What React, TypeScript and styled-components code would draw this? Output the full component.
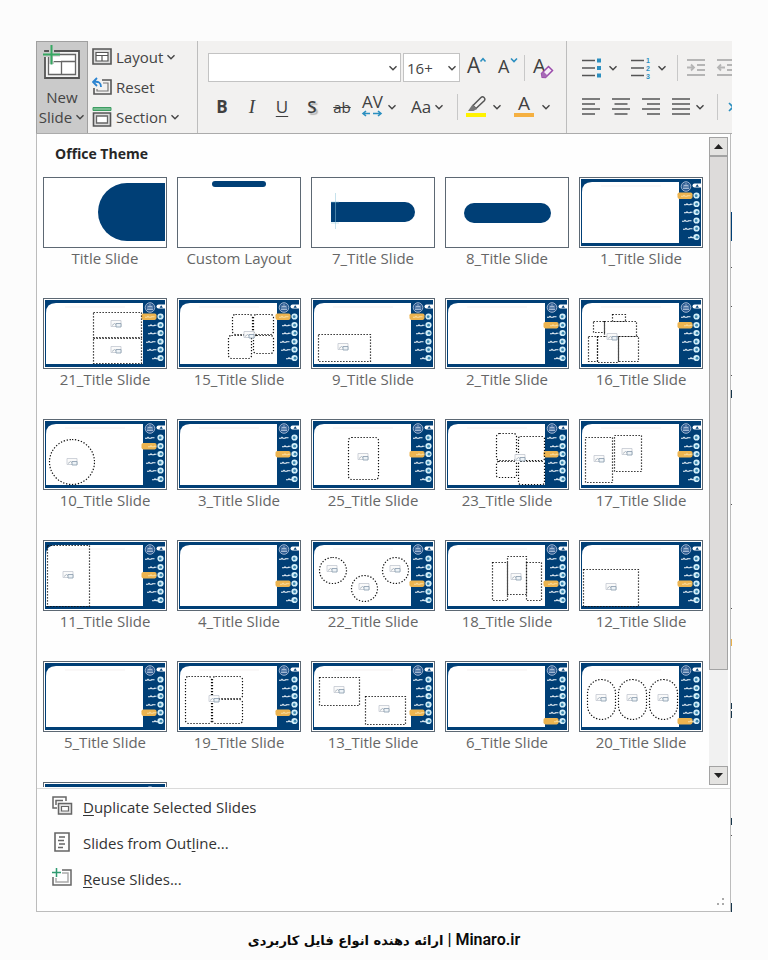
import React from 'react';
import styled, { createGlobalStyle, css } from 'styled-components';

const navy = '#003f76';
const ink = '#444444';
const accent = '#2b8fc0';

const GlobalStyle = createGlobalStyle`
  * { box-sizing: border-box; }
  body { margin: 0; background: #fcfcfc; font-family: 'Open Sans', 'Noto Sans', sans-serif; color: ${ink}; }
  button, input, select { font: inherit; color: inherit; }
`;

const Page = styled.main`
  padding: 41px 36px 0;
  min-height: 100vh;
`;

const Window = styled.div`
  position: relative;
`;

const Ribbon = styled.header`
  display: flex;
  height: 93px;
  background: #f2f1f0;
  border-bottom: 1px solid #ababab;
  overflow: hidden;
`;

const plainButton = css`
  border: 0;
  padding: 0;
  background: none;
  display: flex;
  align-items: center;
  flex: none;
`;

const NewSlideButton = styled.button`
  ${plainButton}
  flex-direction: column;
  width: 52px;
  height: 93px;
  padding-top: 4px;
  background: #cacaca;
  border: 1px solid #a0a0a0;
  font-size: 15px;
  line-height: 20px;
  gap: 5px;
  svg { flex: none; overflow: visible; }
`;

const WithChevron = styled.span`
  display: flex;
  align-items: center;
  gap: 3px;
`;

const SlideTools = styled.div`
  display: flex;
  flex-direction: column;
  width: 110px;
  flex: none;
  padding: 1px 0 0 4px;
  border-right: 1px solid #bdbdbd;
`;

const SlideTool = styled.button`
  ${plainButton}
  height: 30px;
  gap: 4px;
  font-size: 15px;
`;

const ToolGroup = styled.div<{ $width?: number }>`
  display: flex;
  flex-direction: column;
  flex: none;
  gap: 4px;
  width: ${p => (p.$width ? `${p.$width}px` : 'auto')};
  padding: 9px 0 0 9px;
  border-right: ${p => (p.$width ? '1px solid #bdbdbd' : '0')};
`;

const ToolRow = styled.div`
  display: flex;
  align-items: center;
  height: 35px;
`;

const Tool = styled.button<{ $w?: number; $ml?: number }>`
  ${plainButton}
  justify-content: center;
  width: ${p => p.$w ?? 30}px;
  height: 28px;
  margin-left: ${p => p.$ml ?? 0}px;
  font-size: 17px;
  color: #404040;
  svg { flex: none; overflow: visible; }
`;

const Bold = styled.b`font-size: 17px;`;
const Italic = styled.i`font-family: 'Liberation Serif', serif; font-size: 19px;`;
const Underlined = styled.span`text-decoration: underline; text-underline-offset: 3px;`;
const Shadowed = styled.span`font-weight: 600; text-shadow: 2px 2px 1px #b5b5b5;`;
const Struck = styled.s`font-size: 15px; padding: 0 2px;`;
const CaseLabel = styled.span`font-size: 17px;`;

const Separator = styled.span<{ $ml: number }>`
  width: 1px;
  height: 26px;
  flex: none;
  margin-left: ${p => p.$ml}px;
  background: #c8c8c8;
`;

const Combo = styled.label<{ $w: number }>`
  display: flex;
  align-items: center;
  width: ${p => p.$w}px;
  height: 29px;
  margin: 0 2px 0 1px;
  padding-right: 2px;
  background: #fff;
  border: 1px solid #c3c3c3;
  & + & { margin: 0; }
`;

const ComboInput = styled.input`
  flex: 1;
  min-width: 0;
  border: 0;
  padding: 0 0 0 3px;
  background: none;
  outline: 0;
  font-size: 15px;
`;

const Panel = styled.section`
  background: #fefefe;
  border: 1px solid #bcbcbc;
  border-top: 0;
  margin-right: 1px;
`;

const GalleryArea = styled.div`
  display: flex;
  height: 655px;
  border-bottom: 1px solid #dadada;
`;

const Gallery = styled.div`
  flex: 1;
  overflow: hidden;
  padding: 0 0 0 6px;
  margin-bottom: 1px;
`;

const Heading = styled.h2`
  margin: 0;
  padding: 9px 0 0 12px;
  height: 43px;
  font-size: 14px;
  line-height: 22px;
  font-weight: 700;
  color: #262626;
`;

const Grid = styled.div`
  display: grid;
  grid-template-columns: repeat(auto-fill, 124px);
  grid-auto-rows: 121px;
  column-gap: 10px;
`;

const LayoutTile = styled.button`
  ${plainButton}
  flex-direction: column;
  justify-content: flex-start;
  font-size: 15px;
  line-height: 20px;
  color: #666;
  svg { display: block; }
`;

const Scrollbar = styled.div`
  display: flex;
  flex-direction: column;
  width: 19px;
  flex: none;
  margin: 3px 2px 3px 0;
  background: #f1f1f1;
`;

const ScrollArrow = styled.button`
  ${plainButton}
  justify-content: center;
  height: 19px;
  background: #e4e3e1;
  border: 1px solid #a3a3a3;
`;

const ScrollThumb = styled.div`
  height: 514px;
  background: #dddbda;
  border: 1px solid #a3a3a3;
`;

const ScrollTrack = styled.div`
  flex: 1;
`;

const Menu = styled.div`
  display: flex;
  flex-direction: column;
`;

const MenuItem = styled.button`
  ${plainButton}
  height: 36px;
  padding-left: 14px;
  gap: 10px;
  font-size: 15px;
  color: #333;
  u { text-underline-offset: 2px; }
`;

const GripRow = styled.div`
  display: flex;
  justify-content: flex-end;
  height: 14px;
  padding-right: 4px;
`;

const EdgeMarks = styled.svg`
  position: absolute;
  right: 0;
  top: 93px;
`;

const Caption = styled.footer`
  padding-top: 16px;
  text-align: center;
  font-family: Roboto, 'DejaVu Sans', sans-serif;
  font-weight: 600;
  font-size: 16px;
  line-height: 24px;
  color: #0a0a0a;
`;

const Tagline = styled.span`
  font-family: 'DejaVu Sans', sans-serif;
  font-weight: 700;
  font-size: 13px;
`;

const Chevron = () => (
  <svg width="10" height="10" viewBox="0 0 10 10" fill="none" stroke="#444" strokeWidth="1.4">
    <path d="M1.5 3.2 5 6.7 8.5 3.2" />
  </svg>
);

const NewSlideIcon = () => (
  <svg width="38" height="36" viewBox="0 0 38 36" fill="none">
    <path d="M2 5h34v27H2z" fill="#f4f4f4" stroke="#555" strokeWidth="1.800" />
    <path d="M5.500 8.500h27v20h-27z" fill="#fff" />
    <path d="M5.500 8.500h27v20h-27zM5.500 15.500h27M18.500 15.500v13" stroke="#666" strokeWidth="1.300" />
    <path d="M0 8.500h17M8.500 0v18" stroke="#cacaca" strokeWidth="5" />
    <path d="M10 10.500h8v4.500h-8z" fill="#fff" />
    <path d="M0 8.500h17M8.500-1v19.500" stroke="#36a862" strokeWidth="2" />
  </svg>
);

const LayoutIcon = () => (
  <svg width="20" height="18" viewBox="0 0 20 18" fill="none" stroke="#555">
    <path d="M1 1h18v15H1z" fill="#ddd" strokeWidth="1.600" />
    <path d="M4 4.500h12v8.500H4z" fill="#fff" strokeWidth="1.200" />
    <path d="M4 7.500h12M10 7.500V13" strokeWidth="1.200" />
  </svg>
);

const ResetIcon = () => (
  <svg width="20" height="20" viewBox="0 0 20 20" fill="none">
    <path d="M10 3h9v14H2v-6" stroke="#555" strokeWidth="1.600" />
    <path d="M11 6h5v8H5v-2" stroke="#777" strokeWidth="1.200" />
    <path d="M5 1 1 5l4 4M1.500 5C7 4 9 6 9 10" stroke="#2b83d0" strokeWidth="1.800" />
  </svg>
);

const SectionIcon = () => (
  <svg width="20" height="20" viewBox="0 0 20 20" fill="none">
    <path d="M1 .5h18v3H1z" fill="#78bd91" stroke="#3d9d62" />
    <path d="M1.500 6h17v13h-17z" fill="#ddd" stroke="#555" strokeWidth="1.600" />
    <path d="M4.500 9h11v7h-11z" fill="#fff" stroke="#666" strokeWidth="1.300" />
  </svg>
);

const GrowIcon = ({ size, down }: { size: number; down?: boolean }) => (
  <svg width="22" height="24" viewBox="0 0 22 24">
    <text x="1" y="17" fontSize={size} fontFamily="Open Sans" fill="#404040">A</text>
    <path d={down ? 'M14 2.500 17 5.500 20 2.500' : 'M14.500 5.500 17 2.800 19.500 5.500'} fill="none" stroke={accent} strokeWidth="1.600" />
  </svg>
);

const EraserIcon = () => (
  <svg width="24" height="24" viewBox="0 0 24 24">
    <text x="2" y="17" fontSize="20" fontFamily="Open Sans" fill="#404040">A</text>
    <path d="m10.500 17.500 7-7 4 4-7 7-3.300-.3z" fill="#f7eef9" stroke="#9a4bab" strokeWidth="1.500" />
    <path d="m10.500 17.500 2-2 4 4-2 2-3.300-.3z" fill="#a868b7" />
  </svg>
);

const SpacingIcon = () => (
  <svg width="24" height="24" viewBox="0 0 24 24" fill="none">
    <text x="2" y="13" fontSize="17" fontFamily="Open Sans" fill="#404040">AV</text>
    <path d="M3 18.500h7M6 16 3 18.500 6 21M13 18.500h8M18 16l3 2.500-3 2.500" stroke={accent} strokeWidth="1.600" />
  </svg>
);

const HighlightIcon = () => (
  <svg width="22" height="24" viewBox="0 0 22 24" fill="none">
    <path d="M1 18h20v4H1z" fill="#fff200" />
    <path d="m8 10.500 8-8c2-2 5 1 3.500 3L11 13.500z" stroke="#555" strokeWidth="1.500" />
    <path d="m7.500 9.500 4.500 4.500L8.500 16H3z" fill="#777" />
  </svg>
);

const FontColorIcon = () => (
  <svg width="22" height="24" viewBox="0 0 22 24">
    <path d="M1 18h20v4H1z" fill="#f5b041" />
    <text x="5" y="15" fontSize="19" fontFamily="Open Sans" fill="#404040">A</text>
  </svg>
);

const ListIcon = ({ numbered }: { numbered?: boolean }) => (
  <svg width="20" height="22" viewBox="0 0 20 22">
    <path d="M0 3.500h13M0 11h13M0 18.500h13" stroke="#555" strokeWidth="1.600" />
    {numbered ? (
      <g fill={accent} fontSize="7" fontWeight="700" fontFamily="Liberation Sans">
        <text x="15" y="6">1</text><text x="15" y="14">2</text><text x="15" y="22">3</text>
      </g>
    ) : (
      <path d="M15 1.500h4v4h-4zM15 9h4v4h-4zM15 16.500h4v4h-4z" fill={accent} />
    )}
  </svg>
);

const IndentIcon = ({ out }: { out?: boolean }) => (
  <svg width="20" height="20" viewBox="0 0 20 20" fill="none" stroke="#b5b5b5" strokeWidth="1.800">
    <path d="M1 2h18M11 7h8M11 12h8M1 17h18" />
    <path d={out ? 'M9 9.500H2M5 6.500l-3 3 3 3' : 'M1 9.500h7M5 6.500l3 3-3 3'} />
  </svg>
);

const alignments: Record<string, string> = {
  left: 'M0 2h18M0 7h13M0 12h18M0 17h13',
  center: 'M0 2h18M2.500 7h13M0 12h18M2.500 17h13',
  right: 'M0 2h18M5 7h13M0 12h18M5 17h13',
  justify: 'M0 2h18M0 7h18M0 12h18M0 17h18',
};

const AlignIcon = ({ kind }: { kind: string }) => (
  <svg width="18" height="20" viewBox="0 0 18 20">
    <path d={alignments[kind]} stroke="#555" strokeWidth="1.700" />
  </svg>
);

const DuplicateIcon = () => (
  <svg width="22" height="22" viewBox="0 0 22 22" fill="none" stroke="#666" strokeWidth="1.500">
    <path d="M6 12H2V1h13v4M5 9V4.500h7" />
    <path d="M7.500 7.500h13V18h-13z" fill="#e4e4e4" />
    <path d="M10.500 10.500h7v4.500h-7z" fill="#fff" strokeWidth="1.200" />
  </svg>
);

const OutlineIcon = () => (
  <svg width="22" height="22" viewBox="0 0 22 22" fill="none" stroke="#666">
    <path d="M4 1h14v18H4z" strokeWidth="1.600" />
    <path d="M8 5h6M7 8.500h6M8 12h6M7 15.500h5" strokeWidth="1.300" />
  </svg>
);

const ReuseIcon = () => (
  <svg width="22" height="22" viewBox="0 0 22 22" fill="none" strokeWidth="1.500">
    <path d="M11 2h9v15H2V9" stroke="#666" />
    <path d="M11 5h6v9H5v-4" stroke="#aaa" />
    <path d="M1 4.500h9M5.500 0v9" stroke="#2f9a70" />
  </svg>
);

type Shape = [x: number, y: number, w: number, h: number, r?: number];
type SlideLayout = { name?: string; active?: number; shapes?: Shape[]; pics?: [number, number][]; art?: React.ReactNode };

const layouts: SlideLayout[] = [
  { name: 'Title Slide', art: <path d="M122 6v58H84a29 29 0 0 1 0-58z" fill={navy} /> },
  { name: 'Custom Layout', art: <rect x="35" y="4" width="54" height="6" rx="3" fill={navy} /> },
  {
    name: '7_Title Slide',
    art: (
      <>
        <path d="M20 25h74a10 10 0 0 1 0 20H20z" fill={navy} />
        <path d="M24.500 16v36M20 25h8M20 46h8" stroke="#8cc4d8" strokeWidth=".5" />
      </>
    ),
  },
  { name: '8_Title Slide', art: <rect x="19" y="26" width="87" height="20" rx="10" fill={navy} /> },
  { name: '1_Title Slide', active: 0 },
  { name: '21_Title Slide', active: 0, shapes: [[50, 14, 48, 25], [50, 40, 48, 25]], pics: [[73, 26], [73, 52]] },
  { name: '15_Title Slide', active: 0, shapes: [[55, 16, 20, 20, 3], [76, 16, 20, 20, 3], [51, 37, 23, 23, 3], [76, 37, 20, 18, 3]], pics: [[72, 37]] },
  { name: '9_Title Slide', active: 0, shapes: [[7, 36, 52, 27]], pics: [[32, 49]] },
  { name: '2_Title Slide', active: 1 },
  { name: '16_Title Slide', active: 1, shapes: [[33, 16, 13, 7], [14, 23, 11, 11], [25, 23, 32, 15], [9, 38, 9, 25], [18, 38, 21, 26], [39, 38, 20, 25]], pics: [[33, 39]] },
  { name: '10_Title Slide', active: 1, shapes: [[6, 20, 45, 45, 23]], pics: [[29, 43]] },
  { name: '3_Title Slide', active: 2 },
  { name: '25_Title Slide', active: 2, shapes: [[37, 18, 30, 42, 3]], pics: [[52, 38]] },
  { name: '23_Title Slide', active: 2, shapes: [[51, 14, 20, 27, 3], [73, 17, 26, 24, 2], [51, 42, 20, 16, 2], [73, 42, 26, 23, 2]], pics: [[75, 39]] },
  { name: '17_Title Slide', active: 2, shapes: [[6, 18, 27, 45], [35, 16, 27, 36]], pics: [[20, 40], [48, 33]] },
  { name: '11_Title Slide', active: 2, shapes: [[4, 5, 42, 61]], pics: [[25, 35]] },
  { name: '4_Title Slide', active: 3 },
  { name: '22_Title Slide', active: 3, shapes: [[8, 17, 27, 26, 13], [40, 35, 26, 26, 13], [71, 17, 26, 26, 13]], pics: [[21, 29], [53, 47], [84, 29]] },
  { name: '18_Title Slide', active: 3, shapes: [[47, 22, 15, 38], [62, 16, 19, 38], [81, 22, 15, 38]], pics: [[71, 37]] },
  { name: '12_Title Slide', active: 3, shapes: [[4, 29, 55, 37]], pics: [[32, 47]] },
  { name: '5_Title Slide', active: 4 },
  { name: '19_Title Slide', active: 4, shapes: [[8, 15, 26, 47, 3], [35, 15, 30, 22, 3], [35, 38, 30, 24, 3]], pics: [[37, 38]] },
  { name: '13_Title Slide', active: 4, shapes: [[8, 16, 40, 28], [54, 35, 40, 28]], pics: [[28, 29], [73, 48]] },
  { name: '6_Title Slide', active: 5 },
  { name: '20_Title Slide', active: 5, shapes: [[8, 18, 28, 40, 14], [39, 18, 28, 40, 14], [70, 18, 28, 40, 14]], pics: [[22, 37], [53, 37], [84, 37]] },
  { active: 5 },
];

const navRows = [18.5, 27, 35, 43.5, 51.5, 60];
const navWords = [102, 105, 105, 103, 104, 109];

const SlideFrame = ({ active }: { active: number }) => (
  <>
    <path d="M2 2h120v67H2z" fill={navy} />
    <path d="M3 66V15q0-10 10-10h87v61z" fill="#fff" />
    <path d="M22 9h60" stroke="#f8f6f6" strokeWidth="1.500" />
    <circle cx="107" cy="9.500" r="4.800" fill="#2b5a90" stroke="#a9bcd6" strokeWidth=".9" />
    <path d="M104 11.500h6M105 8.500h4M107 6v6M105 7.500v4M109 7.500v4" stroke="#b5c7dd" strokeWidth=".8" />
    <path d="M122 6.500h-6.500a2 2 0 0 0 0 4H122z" fill="#fff" />
    <path d="m116.500 9.800 1.700-2.600 1.700 2.600z" fill={navy} />
    {navRows.map((y, i) => (
      <g key={y}>
        {i === active && <rect x="98.500" y={y - 3} width="15" height="6.400" rx="1.800" fill="#ecb450" />}
        <path
          d={`M${navWords[i]} ${y + 0.8}h2l1-1 1 1h2l1-.8M${Math.min(navWords[i] + 7, 111)} ${y + 0.3}h2.500`}
          stroke={i === active ? '#f8dc9f' : '#eef5fa'}
          strokeWidth="1.100"
          fill="none"
        />
        <circle cx="117.500" cy={y} r="3.100" fill="#d3effa" />
        <circle cx={117.2 + (i % 3) * 0.4} cy={y + 0.2} r="1.400" fill="#3b86ae" />
      </g>
    ))}
  </>
);

const Thumbnail = ({ layout }: { layout: SlideLayout }) => (
  <svg width="124" height="71" viewBox="0 0 124 71" fill="none">
    <rect x=".5" y=".5" width="123" height="70" fill="#fff" stroke="#5d6873" />
    {layout.active !== undefined && <SlideFrame active={layout.active} />}
    {layout.art}
    {layout.shapes?.map(([x, y, w, h, r = 0], i) => (
      <rect key={i} x={x + 0.5} y={y + 0.5} width={w} height={h} rx={r} stroke="#111" strokeWidth="1.200" strokeDasharray="1.300 1.700" />
    ))}
    {layout.pics?.map(([x, y], i) => (
      <g key={i} strokeWidth=".8">
        <path d={`M${x - 5} ${y - 3.5}h10v6h-10z`} fill="#fafafa" stroke="#c3c8d0" />
        <path d={`m${x - 4} ${y + 1.5} 2.500-2 2 1.500`} stroke="#9daab5" />
        <path d={`M${x} ${y - 0.5}h5v3.500h-5z`} fill="#eef3f7" stroke="#8799ab" />
      </g>
    ))}
  </svg>
);

export default function App() {
  return (
    <Page>
      <GlobalStyle />
      <Window>
        <Ribbon>
          <NewSlideButton>
            <NewSlideIcon />
            <span>New<WithChevron>Slide <Chevron /></WithChevron></span>
          </NewSlideButton>
          <SlideTools>
            <SlideTool><LayoutIcon /><WithChevron>Layout <Chevron /></WithChevron></SlideTool>
            <SlideTool><ResetIcon />Reset</SlideTool>
            <SlideTool><SectionIcon /><WithChevron>Section <Chevron /></WithChevron></SlideTool>
          </SlideTools>
          <ToolGroup $width={369}>
            <ToolRow>
              <Combo $w={193}><ComboInput aria-label="Font" defaultValue="" /><Chevron /></Combo>
              <Combo $w={57}><ComboInput aria-label="Font size" defaultValue="16+" /><Chevron /></Combo>
              <Tool $w={24} $ml={5} aria-label="Increase font size"><GrowIcon size={21} /></Tool>
              <Tool $w={24} $ml={7} aria-label="Decrease font size"><GrowIcon size={18} down /></Tool>
              <Separator $ml={4} />
              <Tool $w={24} $ml={6} aria-label="Clear formatting"><EraserIcon /></Tool>
            </ToolRow>
            <ToolRow>
              <Tool aria-label="Bold"><Bold>B</Bold></Tool>
              <Tool aria-label="Italic"><Italic>I</Italic></Tool>
              <Tool aria-label="Underline"><Underlined>U</Underlined></Tool>
              <Tool aria-label="Shadow"><Shadowed>S</Shadowed></Tool>
              <Tool aria-label="Strikethrough"><Struck>ab</Struck></Tool>
              <Tool aria-label="Character spacing"><SpacingIcon /></Tool>
              <Tool $w={10} aria-label="Spacing options"><Chevron /></Tool>
              <Tool $w={26} $ml={11} aria-label="Change case"><CaseLabel>Aa</CaseLabel></Tool>
              <Tool $w={10} aria-label="Case options"><Chevron /></Tool>
              <Separator $ml={13} />
              <Tool $w={24} $ml={6} aria-label="Highlight"><HighlightIcon /></Tool>
              <Tool $w={10} $ml={4} aria-label="Highlight colors"><Chevron /></Tool>
              <Tool $w={24} $ml={10} aria-label="Font color"><FontColorIcon /></Tool>
              <Tool $w={10} $ml={5} aria-label="Font colors"><Chevron /></Tool>
            </ToolRow>
          </ToolGroup>
          <ToolGroup>
            <ToolRow>
              <Tool $w={20} $ml={6} aria-label="Bullets"><ListIcon /></Tool>
              <Tool $w={10} $ml={6} aria-label="Bullet styles"><Chevron /></Tool>
              <Tool $w={20} $ml={13} aria-label="Numbering"><ListIcon numbered /></Tool>
              <Tool $w={10} $ml={6} aria-label="Number styles"><Chevron /></Tool>
              <Separator $ml={10} />
              <Tool $w={20} $ml={8} aria-label="Increase indent"><IndentIcon /></Tool>
              <Tool $w={20} $ml={10} aria-label="Decrease indent"><IndentIcon out /></Tool>
            </ToolRow>
            <ToolRow>
              <Tool $w={18} $ml={6} aria-label="Align left"><AlignIcon kind="left" /></Tool>
              <Tool $w={18} $ml={12} aria-label="Center"><AlignIcon kind="center" /></Tool>
              <Tool $w={18} $ml={12} aria-label="Align right"><AlignIcon kind="right" /></Tool>
              <Tool $w={18} $ml={12} aria-label="Justify"><AlignIcon kind="justify" /></Tool>
              <Tool $w={10} $ml={5} aria-label="Justify options"><Chevron /></Tool>
              <Separator $ml={12} />
              <Tool $w={10} $ml={10} aria-label="Text direction">
                <svg width="10" height="10" viewBox="0 0 10 10"><path d="m1 1 4 4-4 4M9 1 5 5l4 4" fill="none" stroke={accent} strokeWidth="1.600" /></svg>
              </Tool>
            </ToolRow>
          </ToolGroup>
        </Ribbon>
        <Panel>
          <GalleryArea>
            <Gallery>
              <Heading>Office Theme</Heading>
              <Grid>
                {layouts.map((layout, i) => (
                  <LayoutTile key={i} aria-label={layout.name ?? 'More layouts'}>
                    <Thumbnail layout={layout} />
                    {layout.name}
                  </LayoutTile>
                ))}
              </Grid>
            </Gallery>
            <Scrollbar>
              <ScrollArrow aria-label="Scroll up">
                <svg width="9" height="5" viewBox="0 0 9 5"><path d="M0 5 4.500 0 9 5z" fill="#222" /></svg>
              </ScrollArrow>
              <ScrollThumb />
              <ScrollTrack />
              <ScrollArrow aria-label="Scroll down">
                <svg width="9" height="5" viewBox="0 0 9 5"><path d="M0 0h9L4.500 5z" fill="#222" /></svg>
              </ScrollArrow>
            </Scrollbar>
          </GalleryArea>
          <Menu>
            <MenuItem><DuplicateIcon /><span><u>D</u>uplicate Selected Slides</span></MenuItem>
            <MenuItem><OutlineIcon /><span>Slides from Out<u>l</u>ine...</span></MenuItem>
            <MenuItem><ReuseIcon /><span><u>R</u>euse Slides...</span></MenuItem>
          </Menu>
          <GripRow>
            <svg width="10" height="10" viewBox="0 0 10 10"><path d="M6 1h2v2H6zM1 6h2v2H1zM6 6h2v2H6z" fill="#aaa" /></svg>
          </GripRow>
        </Panel>
        <EdgeMarks width="1" height="778" viewBox="0 0 1 778">
          <path d="M0 78h1v29H0z" fill={navy} />
          <path d="M0 256h1v8H0zM0 569h1v6H0zM0 577h1v7H0zM0 684h1v7H0zM0 769h1v9H0z" fill="#16364c" />
          <path d="M0 133h1v1H0zM0 172h1v1H0zM0 241h1v1H0zM0 370h1v1H0zM0 474h1v1H0zM0 701h1v1H0z" fill="#555" />
          <path d="M0 505h1v7H0z" fill="#e9b04a" />
        </EdgeMarks>
      </Window>
      <Caption dir="rtl" lang="fa">Minaro.ir | <Tagline>ارائه دهنده انواع فایل کاربردی</Tagline></Caption>
    </Page>
  );
}
